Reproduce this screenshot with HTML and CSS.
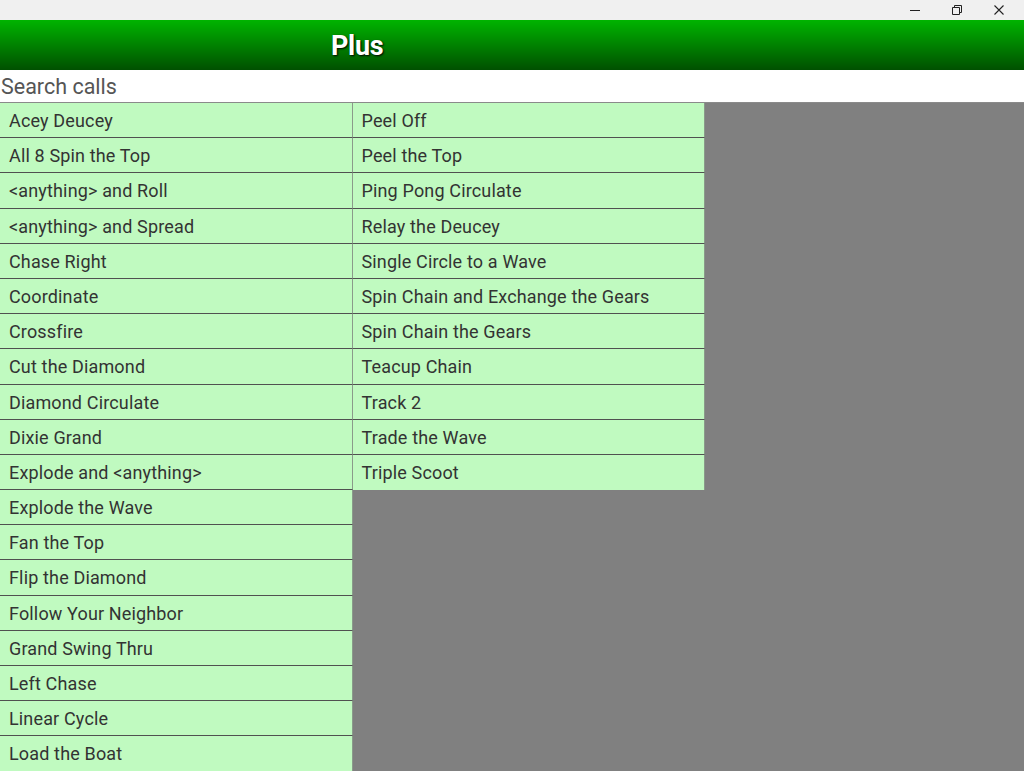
FILE: index.html
```html
<!DOCTYPE html>
<html lang="en">
<head>
	<meta charset="UTF-8">
	<title>Plus</title>
	<link rel="stylesheet" href="styles.css">
</head>
<body>
	<div class="titlebar">
		<span class="winbtn">
			<svg width="10" height="10" viewBox="0 0 10 10"><path d="M0 5.5h10" stroke="#222" stroke-width="1"/></svg>
		</span>
		<span class="winbtn">
			<svg width="10" height="10" viewBox="0 0 10 10"><path d="M0.5 2.5h7v7h-7z M2.5 2.5v-2h7v7h-2" fill="none" stroke="#222" stroke-width="1"/></svg>
		</span>
		<span class="winbtn">
			<svg width="10" height="10" viewBox="0 0 10 10"><path d="M0.5 0.5l9 9 M9.5 0.5l-9 9" stroke="#222" stroke-width="1.1"/></svg>
		</span>
	</div>

	<div class="header"><h1>Plus</h1></div>

	<div class="search">Search calls</div>

	<div class="calls">
		<div class="col">
			<div class="cell">Acey Deucey</div>
			<div class="cell">All 8 Spin the Top</div>
			<div class="cell">&lt;anything&gt; and Roll</div>
			<div class="cell">&lt;anything&gt; and Spread</div>
			<div class="cell">Chase Right</div>
			<div class="cell">Coordinate</div>
			<div class="cell">Crossfire</div>
			<div class="cell">Cut the Diamond</div>
			<div class="cell">Diamond Circulate</div>
			<div class="cell">Dixie Grand</div>
			<div class="cell">Explode and &lt;anything&gt;</div>
			<div class="cell">Explode the Wave</div>
			<div class="cell">Fan the Top</div>
			<div class="cell">Flip the Diamond</div>
			<div class="cell">Follow Your Neighbor</div>
			<div class="cell">Grand Swing Thru</div>
			<div class="cell">Left Chase</div>
			<div class="cell">Linear Cycle</div>
			<div class="cell">Load the Boat</div>
		</div>
		<div class="col">
			<div class="cell">Peel Off</div>
			<div class="cell">Peel the Top</div>
			<div class="cell">Ping Pong Circulate</div>
			<div class="cell">Relay the Deucey</div>
			<div class="cell">Single Circle to a Wave</div>
			<div class="cell">Spin Chain and Exchange the Gears</div>
			<div class="cell">Spin Chain the Gears</div>
			<div class="cell">Teacup Chain</div>
			<div class="cell">Track 2</div>
			<div class="cell">Trade the Wave</div>
			<div class="cell">Triple Scoot</div>
		</div>
	</div>
</body>
</html>
```

FILE: styles.css
```css
*{margin:0;padding:0;box-sizing:border-box;font-family:Roboto, "Liberation Sans", sans-serif;}
html,body{height:100%;overflow:hidden;}
body{background:#808080;display:flex;flex-direction:column;}
.titlebar{height:20px;background:#f0f0f0;display:flex;justify-content:flex-end;align-items:center;padding-right:4px;}
.winbtn{width:42px;height:20px;display:flex;align-items:center;justify-content:center;}
.header{height:50px;background:linear-gradient(#00b400,#005000);display:flex;align-items:center;padding-left:331px;padding-top:2px;}
.header h1{color:#fff;font-size:27px;font-weight:bold;text-shadow:1px 1px 2px #000;letter-spacing:-0.3px;}
.search{height:33px;background:#fff;color:#555;font-size:21.5px;line-height:34px;padding-left:1px;border-bottom:1px solid #8a8a8a;}
.calls{display:flex;align-items:flex-start;flex:1;overflow:hidden;}
.col{width:352.5px;display:flex;flex-direction:column;}
.cell{height:35.2px;flex-shrink:0;background:#c0fac0;color:#333;font-size:18px;letter-spacing:0.15px;line-height:35px;padding-left:9px;border-bottom:1px solid #505050;border-right:1px solid #8a9a8a;white-space:nowrap;}
.col .cell:last-child{border-bottom:none;}
```
